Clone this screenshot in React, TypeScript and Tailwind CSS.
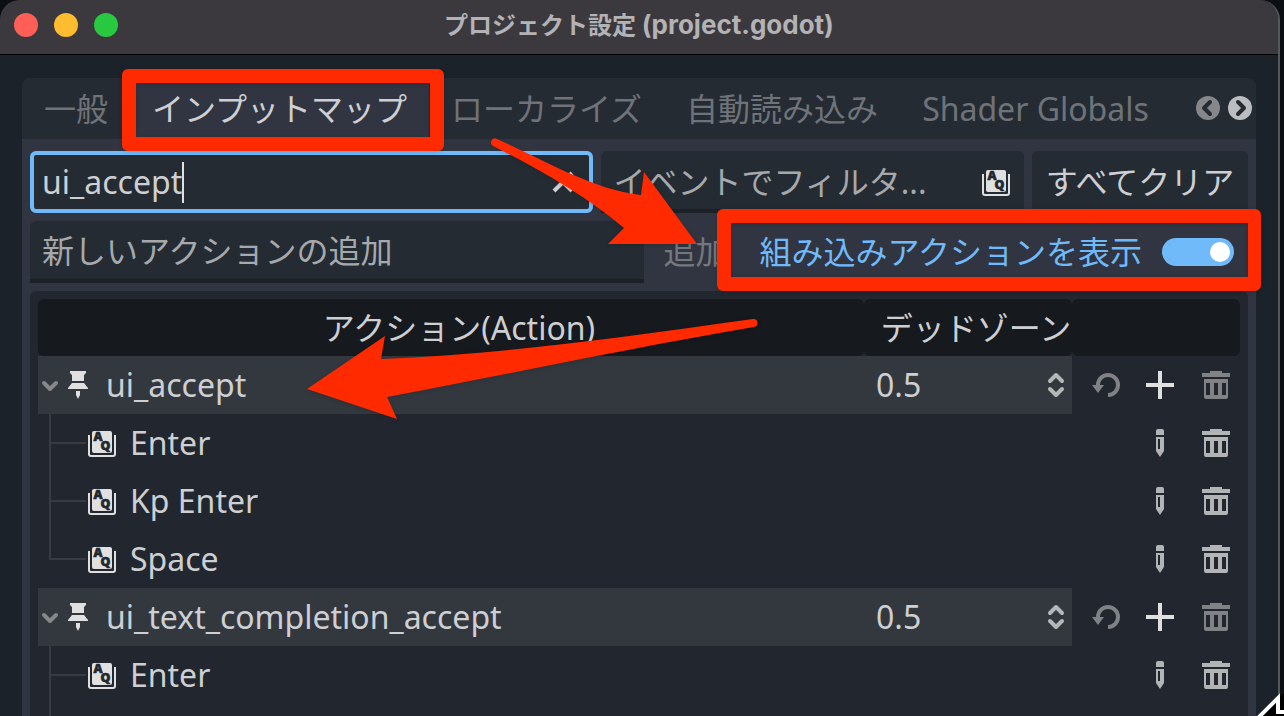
import React from 'react';

type Action = { name: string; deadzone: string; events: string[]; hasMore?: boolean };

const actions: Action[] = [
  { name: 'ui_accept', deadzone: '0.5', events: ['Enter', 'Kp Enter', 'Space'] },
  { name: 'ui_text_completion_accept', deadzone: '0.5', events: ['Enter'], hasMore: true },
];

const KeyboardIcon: React.FC = () => (
  <svg viewBox="0 0 16 16" className="size-8 shrink-0" aria-hidden="true">
    <path fill="#e0e0e0" d="M4 2h8a1 1 0 0 1 1 1v9a1 1 0 0 1-1 1H4a1 1 0 0 1-1-1V3a1 1 0 0 1 1-1z" />
    <path fill="none" stroke="#e0e0e0" d="M1.5 4v9.5a1 1 0 0 0 1 1h11a1 1 0 0 0 1-1V4" />
    <g fill="#22262e" stroke="#22262e" strokeWidth="0.3" fontFamily="Open Sans" fontWeight="800" fontSize="6.2">
      <text x="3.8" y="7.2">A</text>
      <text x="7.3" y="11.4">Q</text>
    </g>
  </svg>
);

const PinIcon: React.FC = () => (
  <svg viewBox="0 0 16 16" className="size-8 shrink-0 fill-[#e0e0e0]" aria-hidden="true">
    <path d="M4 1h8v1l-1 1v3H5V3L4 2zM5 7h6l2 2.500V10H3v-.5zM7 11h2v2l-1 2-1-2z" />
  </svg>
);

const ChevronIcon: React.FC = () => (
  <svg viewBox="0 0 24 24" className="size-6 shrink-0" fill="none" stroke="#868789" strokeWidth="4" strokeLinecap="round" strokeLinejoin="round" aria-hidden="true">
    <path d="M6 10l6 6 6-6" />
  </svg>
);

const SpinIcon: React.FC = () => (
  <svg viewBox="0 0 32 32" className="size-8 shrink-0" fill="none" stroke="#b4b6b8" strokeWidth="4" strokeLinecap="round" strokeLinejoin="round" aria-hidden="true">
    <path d="M10 12l6-6 6 6M10 20l6 6 6-6" />
  </svg>
);

const RevertIcon: React.FC = () => (
  <svg viewBox="0 0 32 32" className="size-8" aria-hidden="true">
    <path fill="none" stroke="#808286" strokeWidth="4" d="M20 26a10 10 0 1 0-10-10v1" />
    <path fill="#808286" d="M4 16h12l-6 8z" />
  </svg>
);

const PlusIcon: React.FC = () => (
  <svg viewBox="0 0 16 16" className="size-8 fill-[#e0e0e0]" aria-hidden="true">
    <path d="M7 1h2v6h6v2H9v6H7V9H1V7h6z" />
  </svg>
);

const PencilIcon: React.FC = () => (
  <svg viewBox="0 0 16 16" className="size-8 fill-[#b3b4b6]" aria-hidden="true">
    <path d="M7 1h2a1 1 0 0 1 1 1v2H6V2a1 1 0 0 1 1-1z" />
    <path fillRule="evenodd" d="M6 5h4v7l-2 3-2-3zM7 6v5h1V6z" />
  </svg>
);

const TrashIcon: React.FC<{ dim?: boolean }> = ({ dim }) => (
  <svg viewBox="0 0 16 16" className={dim ? 'size-8 fill-[#808286]' : 'size-8 fill-[#b3b4b6]'} aria-hidden="true">
    <path d="M5 1h6v1h4v2H1V2h4z" />
    <path fillRule="evenodd" d="M2 5h12v9a1 1 0 0 1-1 1H3a1 1 0 0 1-1-1zM3 7v6h2V7zM7 7v6h2V7zM11 7v6h2V7z" />
  </svg>
);

const EventBranch: React.FC<{ last: boolean }> = ({ last }) => (
  <span className="ml-[11px] flex h-[58px] w-[37px] shrink-0 flex-col">
    <span className="h-[30px] border-b-2 border-l-2 border-[#373c43]"></span>
    {!last && <span className="flex-1 border-l-2 border-[#373c43]"></span>}
  </span>
);

const TitleBar: React.FC = () => (
  <header className="flex h-[55px] items-center border-b border-black bg-[#3b393e] px-3.5 pb-1">
    <div className="flex gap-4">
      <button aria-label="閉じる" className="size-6 rounded-full bg-[#ff5f57]"></button>
      <button aria-label="最小化" className="size-6 rounded-full bg-[#febc2e]"></button>
      <button aria-label="最大化" className="size-6 rounded-full bg-[#28c840]"></button>
    </div>
    <h1 className="mr-[104px] flex-1 text-center font-['Inter','Noto_Sans_CJK_JP',sans-serif] text-2xl leading-8 font-bold text-[#b3b2b5]">
      プロジェクト設定 <span className="text-[26px]">(project.godot)</span>
    </h1>
  </header>
);

const TabBar: React.FC = () => (
  <nav className="flex h-[61px] items-center overflow-hidden rounded-t-lg bg-[#252b33] whitespace-nowrap text-[#6f7379]">
    <button className="h-full px-[22px]">一般</button>
    <button className="h-full bg-[#303541] px-[22px] text-[#cdcfd2]">インプットマップ</button>
    <button className="h-full px-[22px]">ローカライズ</button>
    <button className="h-full px-[22px]">自動読み込み</button>
    <button className="h-full px-[22px]">Shader Globals</button>
    <div className="mr-1 ml-auto flex gap-2 pb-0.5">
      <button aria-label="前のタブ">
        <svg viewBox="0 0 24 24" className="size-6" fill="none" aria-hidden="true">
          <circle cx="12" cy="12" r="12" fill="#85878a" />
          <path d="M14 6l-6 6 6 6" stroke="#252b33" strokeWidth="4" strokeLinecap="round" strokeLinejoin="round" />
        </svg>
      </button>
      <button aria-label="次のタブ">
        <svg viewBox="0 0 24 24" className="size-6" fill="none" aria-hidden="true">
          <circle cx="12" cy="12" r="12" fill="#bcbdc0" />
          <path d="M10 6l6 6-6 6" stroke="#252b33" strokeWidth="4" strokeLinecap="round" strokeLinejoin="round" />
        </svg>
      </button>
    </div>
  </nav>
);

const Toolbar: React.FC = () => (
  <div className="flex flex-col gap-2">
    <div className="grid grid-cols-[4fr_3fr_216px] gap-2">
      <div className="flex h-[62px] min-w-0 items-center rounded-md border-4 border-[#70bafa] bg-[#252b33] px-2">
        <input aria-label="名前でフィルタ" defaultValue="ui_accept" className="field-sizing-content bg-transparent outline-none" />
        <span className="h-[41px] w-0.5 bg-[#e0e0e0]"></span>
        <button aria-label="クリア" className="ml-auto pr-0.5">
          <svg viewBox="0 0 32 32" className="size-8" fill="none" stroke="#cdcfd2" strokeWidth="4" aria-hidden="true">
            <path d="M7 25L25 7M7 7l18 18" />
          </svg>
        </button>
      </div>
      <div className="flex h-[62px] min-w-0 items-center rounded-t-md border-b-4 border-[#1c2127] bg-[#252b33] px-3 pt-1">
        <input aria-label="イベントでフィルタ" placeholder="イベントでフィルタ..." className="min-w-0 flex-1 bg-transparent outline-none placeholder:text-[#a6a9ac]" />
        <KeyboardIcon />
      </div>
      <button className="h-[62px] rounded-md bg-[#252b33]">すべてクリア</button>
    </div>
    <div className="flex gap-2">
      <input
        aria-label="新しいアクションの追加"
        placeholder="新しいアクションの追加"
        className="h-[62px] min-w-0 flex-1 rounded-t-md border-b-4 border-[#1c2127] bg-[#252b33] px-3 outline-none placeholder:text-[#a6a9ac]"
      />
      <button disabled className="px-3 text-[#74777d]">
        追加
      </button>
      <label className="flex items-center gap-5 pr-3.5 pl-3 text-[#70bafa]">
        組み込みアクションを表示
        <input
          type="checkbox"
          role="switch"
          defaultChecked
          className="flex h-7 w-[72px] appearance-none items-center rounded-full bg-[#70bafa] px-1 before:size-5 before:rounded-full before:bg-white checked:justify-end"
        />
      </label>
    </div>
  </div>
);

const ActionRows: React.FC<{ action: Action }> = ({ action }) => (
  <>
    <tr className="h-[58px]">
      <td className="bg-[#33383e] p-0">
        <div className="flex items-center">
          <button aria-label="折りたたむ">
            <ChevronIcon />
          </button>
          <PinIcon />
          <span className="ml-3">{action.name}</span>
        </div>
      </td>
      <td className="bg-[#33383e] p-0">
        <div className="flex items-center pl-3">
          <input aria-label={`${action.name} デッドゾーン`} defaultValue={action.deadzone} className="min-w-0 flex-1 bg-transparent outline-none" />
          <SpinIcon />
        </div>
      </td>
      <td className="p-0">
        <div className="flex justify-end gap-6 pr-2">
          <button aria-label="元に戻す">
            <RevertIcon />
          </button>
          <button aria-label="イベントを追加">
            <PlusIcon />
          </button>
          <button aria-label="アクションを削除" disabled>
            <TrashIcon dim />
          </button>
        </div>
      </td>
    </tr>
    {action.events.map((event, index) => (
      <tr key={event} className="h-[58px]">
        <td className="p-0" colSpan={2}>
          <div className="flex items-center">
            <EventBranch last={index === action.events.length - 1 && !action.hasMore} />
            <KeyboardIcon />
            <span className="ml-3">{event}</span>
          </div>
        </td>
        <td className="p-0">
          <div className="flex justify-end gap-6 pr-2">
            <button aria-label="イベントを編集">
              <PencilIcon />
            </button>
            <button aria-label="イベントを削除">
              <TrashIcon />
            </button>
          </div>
        </td>
      </tr>
    ))}
    {action.hasMore && (
      <tr>
        <td className="p-0" colSpan={3}>
          <span className="ml-[11px] block h-4 border-l-2 border-[#373c43]"></span>
        </td>
      </tr>
    )}
  </>
);

const Annotations: React.FC = () => (
  <svg viewBox="0 0 1284 716" className="pointer-events-none absolute top-0 left-0 h-[716px] w-[1284px]" aria-hidden="true">
    <g fill="#ff2a00" className="drop-shadow-sm">
      <path fillRule="evenodd" d="M128 69h310a6 6 0 0 1 6 6v70a6 6 0 0 1-6 6H128a6 6 0 0 1-6-6V75a6 6 0 0 1 6-6zM136 83v54h294V83z" />
      <path fillRule="evenodd" d="M723 209h532a6 6 0 0 1 6 6v70a6 6 0 0 1-6 6H723a6 6 0 0 1-6-6v-70a6 6 0 0 1 6-6zM731 223v54h517v-54z" />
      <path d="M497 139C540 158 593 190 641 195L644 172 697 244H608L624 228C590 199 545 172 493 146A4 4 0 0 1 497 139z" />
      <path d="M753 319C630 336 500 355 381 359L385 336 307 389 397 419 387 397C500 376 630 348 754 327A4 4 0 0 0 753 319z" />
    </g>
    <path d="M1284 693v23h-26z" fill="#000" />
    <path d="M1256 720L1278 698V712H1288" fill="none" stroke="#fff" strokeWidth="4" />
  </svg>
);

export default function App() {
  return (
    <div className="relative h-screen overflow-hidden bg-[#0b0e12] pr-1 font-['Noto_Sans','Noto_Sans_CJK_JP',sans-serif] text-[32px] leading-10 text-[#cdcfd2]">
      <main className="flex h-full flex-col overflow-hidden rounded-t-[20px] border-r-2 border-[#55595d] bg-[#1c2229]">
        <TitleBar />
        <div className="mt-[23px] mr-[22px] ml-[22px] flex min-h-0 flex-1 flex-col">
          <TabBar />
          <section className="flex min-h-0 flex-1 flex-col gap-2 bg-[#303541] px-2 pt-3">
            <Toolbar />
            <div className="min-h-0 flex-1 overflow-hidden rounded-t-md bg-[#22262e] px-2 pt-2">
              <table className="w-full table-fixed border-separate border-spacing-0">
                <colgroup>
                  <col />
                  <col className="w-[208px]" />
                  <col className="w-[168px]" />
                </colgroup>
                <thead>
                  <tr className="h-[57px]">
                    <th className="rounded-md bg-[#16191d] p-0 pl-4 font-normal">アクション(Action)</th>
                    <th className="rounded-md bg-[#16191d] p-0 pl-4 font-normal">デッドゾーン</th>
                    <th className="rounded-md bg-[#16191d] p-0" aria-label="操作"></th>
                  </tr>
                </thead>
                <tbody>
                  {actions.map((action) => (
                    <ActionRows key={action.name} action={action} />
                  ))}
                </tbody>
              </table>
            </div>
          </section>
        </div>
      </main>
      <Annotations />
    </div>
  );
}
